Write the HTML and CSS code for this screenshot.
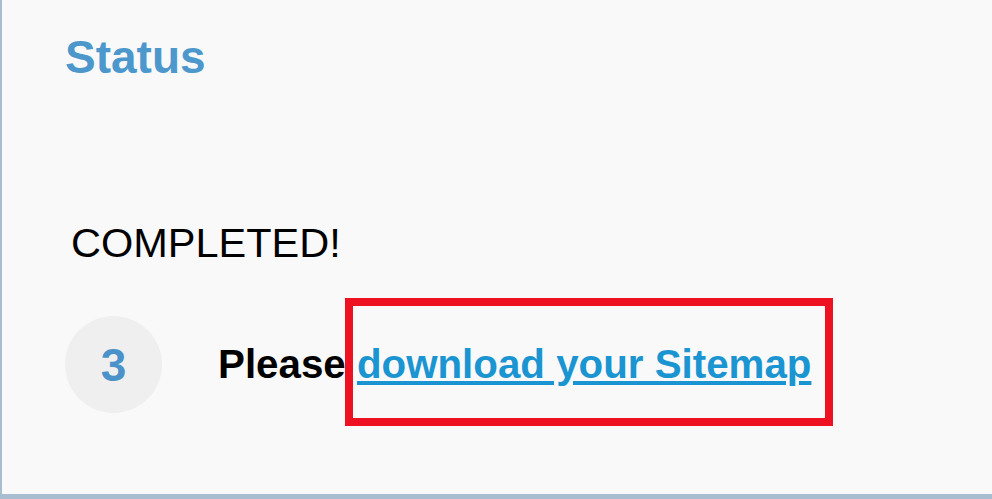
FILE: index.html
```html
<!DOCTYPE html>
<html>
<head>
	<title>Sitemap Status</title>
	<link rel="stylesheet" href="styles.css">
</head>
<body>
	<div class="panel">
		<h2 class="title">Status</h2>
		<p class="done">COMPLETED!</p>
		<div class="step">
			<span class="step-num">3</span>
			<p class="step-text">Please <a href="#" class="download">download your Sitemap</a></p>
			<span class="highlight"></span>
		</div>
	</div>
</body>
</html>
```

FILE: styles.css
```css
body {
	margin: 0;
	padding: 0;
	font-family: "Liberation Sans", Arial, sans-serif;
	background-color: #f9f9f9;
}

.panel {
	box-sizing: border-box;
	height: 499px;
	border-left: 2px solid #a9bdd1;
	border-bottom: 5px solid #a9bdd1;
	background-color: #f9f9f9;
	padding: 31px 0 0 63px;
}

.title {
	margin: 0;
	font-size: 46px;
	line-height: 52px;
	font-weight: bold;
	color: #4c98cc;
}

.done {
	margin: 137px 0 0 6px;
	font-size: 41.5px;
	line-height: 46px;
	color: #000;
}

.step {
	position: relative;
	display: flex;
	align-items: center;
	margin-top: 50px;
}

.step-num {
	width: 97px;
	height: 97px;
	border-radius: 50%;
	background-color: #efefef;
	color: #4a92c9;
	font-size: 46px;
	font-weight: bold;
	display: flex;
	align-items: center;
	justify-content: center;
}

.step-text {
	margin: 0 0 0 56px;
	font-size: 40.3px;
	line-height: 46px;
	font-weight: bold;
	color: #000;
}

.download {
	color: #1a95d1;
}

.highlight {
	position: absolute;
	left: 280px;
	top: -18px;
	width: 472px;
	height: 112px;
	border: 8px solid #ee1122;
}
```
